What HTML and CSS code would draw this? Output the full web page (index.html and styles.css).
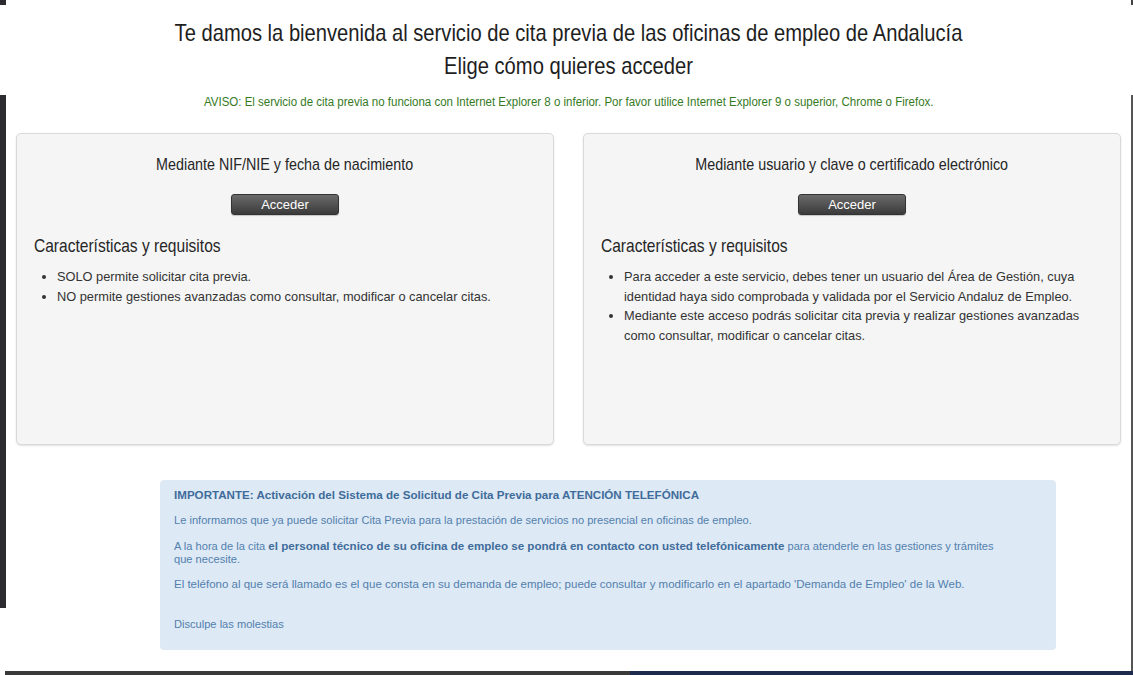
FILE: index.html
```html
<!DOCTYPE html>
<html lang="es">
<head>
<meta charset="utf-8">
<title>Cita previa - Oficinas de empleo de Andalucía</title>
<link rel="stylesheet" href="styles.css">
</head>
<body>
<div class="edge edge-tl"></div>
<div class="edge edge-left"></div>
<div class="edge edge-tr"></div>
<div class="edge edge-right"></div>
<div class="edge edge-bottom"></div>
<div class="edge edge-bottom-navy"></div>

<main class="page">
  <h1 class="title">
    <span class="title-line">Te damos la bienvenida al servicio de cita previa de las oficinas de empleo de Andalucía</span>
    <span class="title-line">Elige cómo quieres acceder</span>
  </h1>
  <p class="aviso"><span class="aviso-text">AVISO: El servicio de cita previa no funciona con Internet Explorer 8 o inferior. Por favor utilice Internet Explorer 9 o superior, Chrome o Firefox.</span></p>

  <div class="panels">
    <section class="panel">
      <h2 class="panel-title"><span class="narrow">Mediante NIF/NIE y fecha de nacimiento</span></h2>
      <div class="btn-row"><button class="btn">Acceder</button></div>
      <h3 class="req-title"><span class="narrow-left">Características y requisitos</span></h3>
      <ul class="req-list">
        <li>SOLO permite solicitar cita previa.</li>
        <li>NO permite gestiones avanzadas como consultar, modificar o cancelar citas.</li>
      </ul>
    </section>
    <section class="panel">
      <h2 class="panel-title"><span class="narrow">Mediante usuario y clave o certificado electrónico</span></h2>
      <div class="btn-row"><button class="btn">Acceder</button></div>
      <h3 class="req-title"><span class="narrow-left">Características y requisitos</span></h3>
      <ul class="req-list">
        <li>Para acceder a este servicio, debes tener un usuario del Área de Gestión, cuya identidad haya sido comprobada y validada por el Servicio Andaluz de Empleo.</li>
        <li>Mediante este acceso podrás solicitar cita previa y realizar gestiones avanzadas como consultar, modificar o cancelar citas.</li>
      </ul>
    </section>
  </div>

  <div class="info">
    <p class="info-title">IMPORTANTE: Activación del Sistema de Solicitud de Cita Previa para ATENCIÓN TELEFÓNICA</p>
    <p>Le informamos que ya puede solicitar Cita Previa para la prestación de servicios no presencial en oficinas de empleo.</p>
    <p>A la hora de la cita <strong>el personal técnico de su oficina de empleo se pondrá en contacto con usted telefónicamente</strong> para atenderle en las gestiones y trámites que necesite.</p>
    <p class="info-phone">El teléfono al que será llamado es el que consta en su demanda de empleo; puede consultar y modificarlo en el apartado 'Demanda de Empleo' de la Web.</p>
    <p class="info-last">Disculpe las molestias</p>
  </div>
</main>
</body>
</html>
```

FILE: styles.css
```css
html, body {
  margin: 0;
  padding: 0;
  background: #ffffff;
}

body {
  font-family: "Liberation Sans", Arial, Helvetica, sans-serif;
  color: #333333;
  width: 1133px;
  height: 675px;
  overflow: hidden;
  position: relative;
}

.edge {
  position: absolute;
  background: #2c2c30;
}
.edge-tl { left: 0; top: 0; width: 6px; height: 5px; }
.edge-left { left: 0; top: 95px; width: 6px; height: 513px; }
.edge-tr { right: 0; top: 0; width: 2px; height: 5px; background: #444; }
.edge-right { right: 0; top: 95px; width: 2px; height: 580px; background: #555; }
.edge-bottom { left: 5px; bottom: 0; width: 625px; height: 4px; background: #3a3a3a; }
.edge-bottom-navy { left: 630px; bottom: 0; right: 0; height: 4px; background: #1c2b4e; }

.page {
  padding: 16px 12px 0 16px;
}

.title {
  margin: 0;
  text-align: center;
  font-weight: normal;
  font-size: 24px;
  line-height: 33px;
  color: #1e1e1e;
}

.title-line {
  display: block;
  white-space: nowrap;
  transform: scaleX(0.84);
}

.aviso {
  margin: 12px 0 0;
  text-align: center;
  font-size: 12px;
  line-height: 16px;
  color: #357a1e;
}

.aviso-text {
  display: inline-block;
  white-space: nowrap;
  transform: scaleX(0.958);
}

.panels {
  margin-top: 23px;
  display: grid;
  grid-template-columns: 538px 538px;
  column-gap: 29px;
}

.panel {
  box-sizing: border-box;
  min-height: 312px;
  background: #f5f5f5;
  border: 1px solid #d9d9d9;
  border-radius: 5px;
  box-shadow: 0 1px 2px rgba(0, 0, 0, 0.12);
  padding: 20px 17px 16px;
}

.panel-title {
  margin: 0;
  text-align: center;
  font-weight: normal;
  font-size: 17px;
  line-height: 22px;
  color: #262626;
}

.narrow {
  display: inline-block;
  white-space: nowrap;
  transform: scaleX(0.842);
}

.narrow-left {
  display: inline-block;
  white-space: nowrap;
  transform: scaleX(0.84);
  transform-origin: left center;
}

.btn-row {
  display: flex;
  justify-content: center;
  margin-top: 18px;
}

.btn {
  width: 108px;
  height: 21px;
  padding: 0;
  border: 1px solid #333333;
  border-radius: 3px;
  background: linear-gradient(#6a6a6a, #3b3b3b);
  color: #ffffff;
  font-family: "Liberation Sans", Arial, sans-serif;
  font-size: 13px;
  line-height: 19px;
  box-shadow: 0 1px 1px rgba(0, 0, 0, 0.2);
}

.req-title {
  margin: 20px 0 0;
  font-weight: normal;
  font-size: 18.5px;
  line-height: 22px;
  color: #262626;
}

.req-list {
  margin: 10px 0 0;
  padding-left: 23px;
  font-size: 12.8px;
  line-height: 19.5px;
  color: #333333;
}

.info {
  margin: 35px 0 0 144px;
  width: 896px;
  box-sizing: border-box;
  min-height: 170px;
  background: #dde9f5;
  border-radius: 4px;
  padding: 8px 50px 10px 14px;
  font-size: 11.1px;
  line-height: 13px;
  color: #5280ad;
}

.info p {
  margin: 0 0 12px;
}

.info .info-title {
  font-size: 11.6px;
  font-weight: bold;
  color: #3f6c9b;
  margin-bottom: 13px;
}

.info strong {
  font-size: 11.6px;
  line-height: 13px;
  color: #3f6c9b;
}

.info .info-phone {
  font-size: 11.5px;
}

.info .info-last {
  margin-top: 27px;
  margin-bottom: 0;
}
```
